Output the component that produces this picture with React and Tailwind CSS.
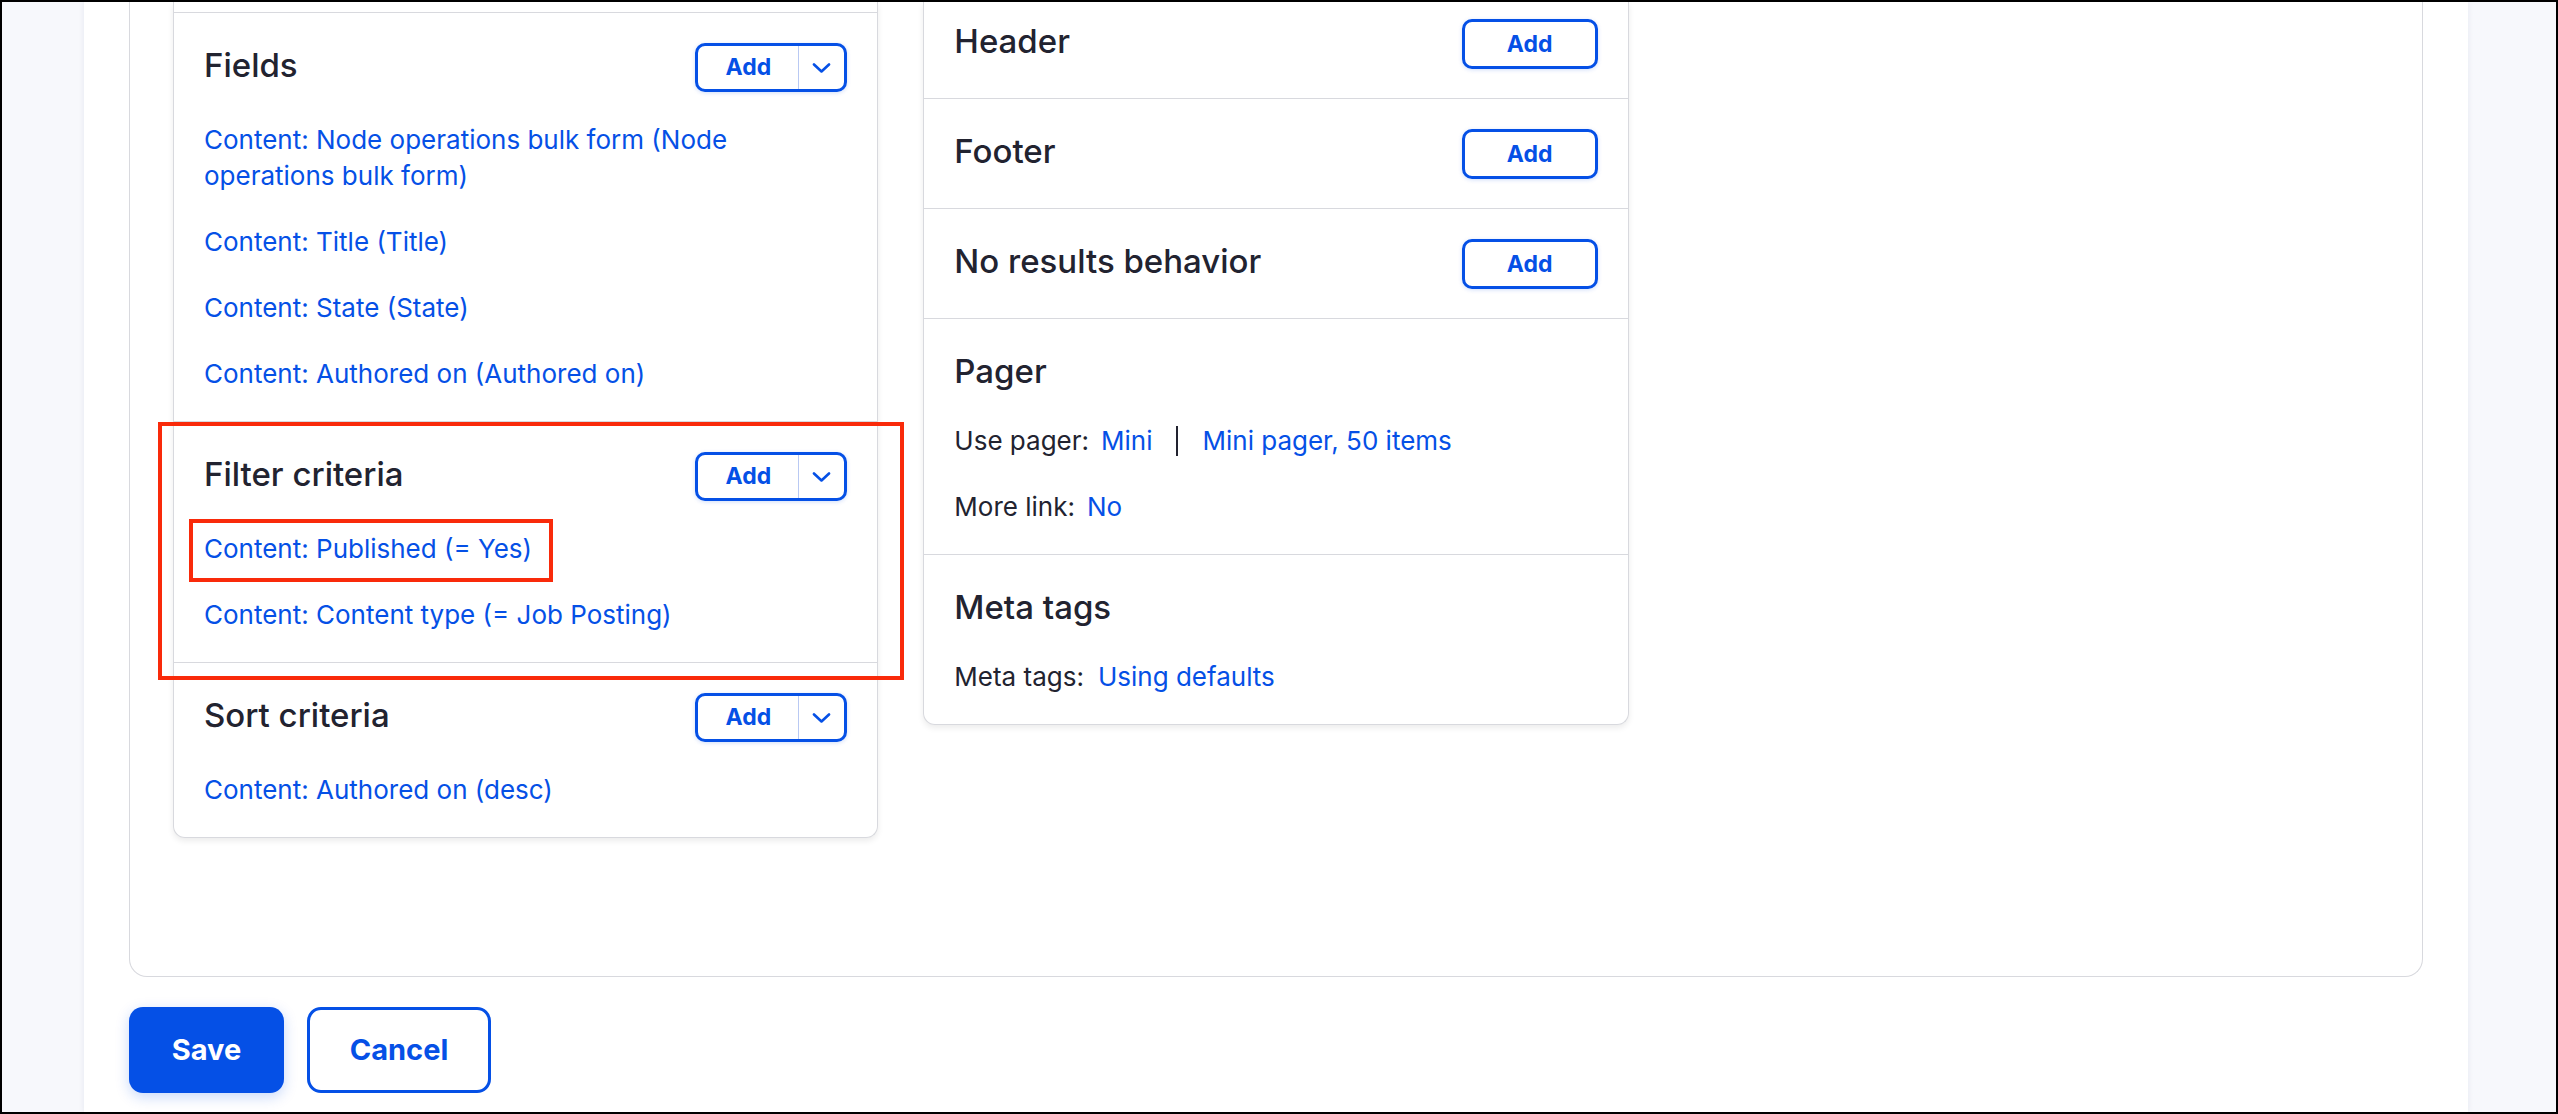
import React from 'react';

const BLUE = 'text-[#0550e6]';

const SplitAdd = () => (
  <div className="flex h-[49px] w-[152px] shrink-0 overflow-hidden rounded-[10px] border-[3px] border-[#0550e6] bg-white shadow-[0_1px_4px_rgba(5,80,230,0.18)]">
    <span className="flex flex-1 items-center justify-center border-r border-[#b9c9f3] text-[23px] font-bold text-[#0550e6]">
      Add
    </span>
    <span className="flex w-[45px] items-center justify-center">
      <svg width="19" height="10" viewBox="0 0 19 10" fill="none">
        <path d="M2 1.5 L9.5 8.5 L17 1.5" stroke="#0550e6" strokeWidth="2.6" strokeLinecap="round" strokeLinejoin="round" />
      </svg>
    </span>
  </div>
);

const PlainAdd = () => (
  <div className="flex h-[50px] w-[136px] shrink-0 items-center justify-center rounded-[10px] border-[3px] border-[#0550e6] bg-white text-[23px] font-bold text-[#0550e6] shadow-[0_1px_4px_rgba(5,80,230,0.18)]">
    Add
  </div>
);

const Heading = ({ children, lift }) => (
  <h3 className={`text-[33px] font-medium leading-[44px] text-[#222330] ${lift ? 'pb-[6px]' : ''}`}>{children}</h3>
);

const Link = ({ children }) => (
  <a className={`text-[26px] leading-[36px] ${BLUE}`}>{children}</a>
);

// left column section: heading + split button + list of links
const ListSection = ({ title, items, last }) => (
  <div className={`px-[30px] pt-[30px] pb-[29px] ${last ? '' : 'border-b border-[#d8d9de]'}`}>
    <div className="flex h-[49px] items-center justify-between">
      <Heading lift>{title}</Heading>
      <SplitAdd />
    </div>
    {items.map((item) => (
      <div key={item} className="mt-[30px]">
        <Link>{item}</Link>
      </div>
    ))}
  </div>
);

const AddSection = ({ title, first }) => (
  <div className={`flex items-center justify-between border-b border-[#d8d9de] px-[30px] pb-[29px] ${first ? 'pt-[17px]' : 'pt-[30px]'}`}>
    <Heading lift>{title}</Heading>
    <PlainAdd />
  </div>
);

const Row = ({ children }) => (
  <div className="mt-[30px] flex items-center text-[26px] leading-[36px] text-[#222330]">{children}</div>
);

export default function App() {
  return (
    <div className="box-border flex h-[1114px] w-[2558px] overflow-hidden border-2 border-black bg-[#f7f8fc] font-['Inter',sans-serif]">
      <div className="w-[82px] shrink-0" />

      <main className="relative z-10 flex w-[2384px] shrink-0 flex-col bg-white px-[45px] shadow-[0_0_6px_rgba(30,40,90,0.08)]">
        <div className="rounded-b-[18px] border-x border-b border-[#d8d9de] px-[43px] pb-[138px]">
          <div className="grid grid-cols-3 items-start gap-x-[45px]">
            {/* Left column */}
            <div className="relative rounded-b-[12px] border-x border-b border-[#d8d9de] bg-white shadow-[0_3px_6px_rgba(0,0,0,0.08)]">
              <div className="h-[11px] border-b border-[#d8d9de]" />
              <ListSection
                title="Fields"
                items={[
                  'Content: Node operations bulk form (Node operations bulk form)',
                  'Content: Title (Title)',
                  'Content: State (State)',
                  'Content: Authored on (Authored on)',
                ]}
              />
              <div className="relative">
                <ListSection
                  title="Filter criteria"
                  items={['Content: Published (= Yes)', 'Content: Content type (= Job Posting)']}
                />
                <span className="pointer-events-none absolute left-[15px] top-[97px] h-[63px] w-[364px] border-[4px] border-[#f92a0a]" />
              </div>
              <ListSection title="Sort criteria" items={['Content: Authored on (desc)']} last />

              <span className="pointer-events-none absolute left-[-16px] top-[420px] h-[258px] w-[746px] border-[4px] border-[#f92a0a]" />
            </div>

            {/* Middle column */}
            <div className="rounded-b-[12px] border-x border-b border-[#d8d9de] bg-white shadow-[0_3px_6px_rgba(0,0,0,0.08)]">
              <AddSection title="Header" first />
              <AddSection title="Footer" />
              <AddSection title="No results behavior" />

              <div className="border-b border-[#d8d9de] px-[30px] pt-[30px] pb-[29px]">
                <Heading>Pager</Heading>
                <Row>
                  <span>Use pager:</span>
                  <a className={`ml-[12px] ${BLUE}`}>Mini</a>
                  <span className="mx-[24px] h-[30px] w-[2px] bg-[#222330]" />
                  <a className={BLUE}>Mini pager, 50 items</a>
                </Row>
                <Row>
                  <span>More link:</span>
                  <a className={`ml-[12px] ${BLUE}`}>No</a>
                </Row>
              </div>

              <div className="px-[30px] pt-[30px] pb-[29px]">
                <Heading>Meta tags</Heading>
                <Row>
                  <span>Meta tags:</span>
                  <a className={`ml-[14px] ${BLUE}`}>Using defaults</a>
                </Row>
              </div>
            </div>

            <div />
          </div>
        </div>

        <div className="mt-[30px] flex gap-[23px]">
          <button className="h-[86px] w-[155px] rounded-[14px] bg-[#0550e6] text-[29px] font-bold text-white shadow-[0_4px_14px_rgba(5,80,230,0.22)]">
            Save
          </button>
          <button className="h-[86px] w-[184px] rounded-[14px] border-[3px] border-[#0550e6] bg-white text-[29px] font-bold text-[#0550e6]">
            Cancel
          </button>
        </div>
      </main>

      <div className="flex-1" />
    </div>
  );
}
